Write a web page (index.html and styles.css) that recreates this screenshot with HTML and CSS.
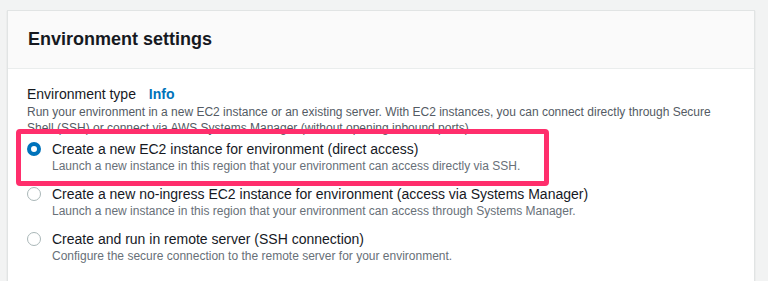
FILE: index.html
```html
<!DOCTYPE html>
<html lang="en">
<head>
    <meta charset="UTF-8">
    <meta name="viewport" content="width=device-width, initial-scale=1.0">
    <title>Environment settings</title>
    <link rel="stylesheet" href="styles.css">
</head>
<body>
    <section class="panel">
        <header class="panel-header">
            <h2>Environment settings</h2>
        </header>
        <div class="panel-body">
            <div class="field-label">Environment type <a href="#" class="info">Info</a></div>
            <p class="field-desc">Run your environment in a new EC2 instance or an existing server. With EC2 instances, you can connect directly through Secure Shell (SSH) or connect via AWS Systems Manager (without opening inbound ports).</p>

            <div class="options">
                <label class="option highlight">
                    <span class="radio checked"></span>
                    <span class="option-text">
                        <span class="option-title">Create a new EC2 instance for environment (direct access)</span>
                        <span class="option-desc">Launch a new instance in this region that your environment can access directly via SSH.</span>
                    </span>
                </label>
                <label class="option">
                    <span class="radio"></span>
                    <span class="option-text">
                        <span class="option-title">Create a new no-ingress EC2 instance for environment (access via Systems Manager)</span>
                        <span class="option-desc">Launch a new instance in this region that your environment can access through Systems Manager.</span>
                    </span>
                </label>
                <label class="option">
                    <span class="radio"></span>
                    <span class="option-text">
                        <span class="option-title">Create and run in remote server (SSH connection)</span>
                        <span class="option-desc">Configure the secure connection to the remote server for your environment.</span>
                    </span>
                </label>
            </div>
        </div>
    </section>
</body>
</html>
```

FILE: styles.css
```css
body {
    font-family: 'Liberation Sans', Arial, sans-serif;
    background-color: #f2f3f3;
    color: #16191f;
    margin: 0;
    padding: 10px 13px 0 7px;
    overflow: hidden;
}
.panel {
    background-color: #fff;
    border: 1px solid #e1e4e4;
    border-bottom: none;
    box-shadow: 0 1px 1px rgba(0,28,36,0.15);
    height: 271px;
    box-sizing: border-box;
}
.panel-header {
    background-color: #fafafa;
    border-bottom: 1px solid #eaeded;
    height: 57px;
    display: flex;
    align-items: center;
    padding: 0 20px;
}
.panel-header h2 {
    margin: 0;
    font-size: 18px;
    font-weight: 700;
}
.panel-body {
    padding: 16px 19px 0 19px;
}
.field-label {
    font-size: 14px;
    line-height: 18px;
}
.info {
    color: #0073bb;
    font-weight: 700;
    text-decoration: none;
    margin-left: 9px;
}
.field-desc {
    margin: 1px 0 0;
    font-size: 12px;
    line-height: 16px;
    color: #545b64;
}
.options {
    display: flex;
    flex-direction: column;
    gap: 11px;
    margin-top: 4px;
}
.option {
    display: flex;
    align-items: flex-start;
    gap: 11px;
    position: relative;
}
.highlight::after {
    content: "";
    position: absolute;
    left: -11px;
    top: -11px;
    bottom: -12px;
    width: 533px;
    border: 5px solid #ff2e6c;
    border-radius: 4px;
    box-sizing: border-box;
}
.radio {
    width: 14px;
    height: 14px;
    margin-top: 2px;
    border: 1.5px solid #aab7b8;
    border-radius: 50%;
    box-sizing: border-box;
    flex-shrink: 0;
}
.radio.checked {
    border: 4px solid #0073bb;
}
.option-text {
    display: flex;
    flex-direction: column;
}
.option-title {
    font-size: 14px;
    line-height: 18px;
}
.option-desc {
    font-size: 12px;
    line-height: 16px;
    color: #687078;
}
```
